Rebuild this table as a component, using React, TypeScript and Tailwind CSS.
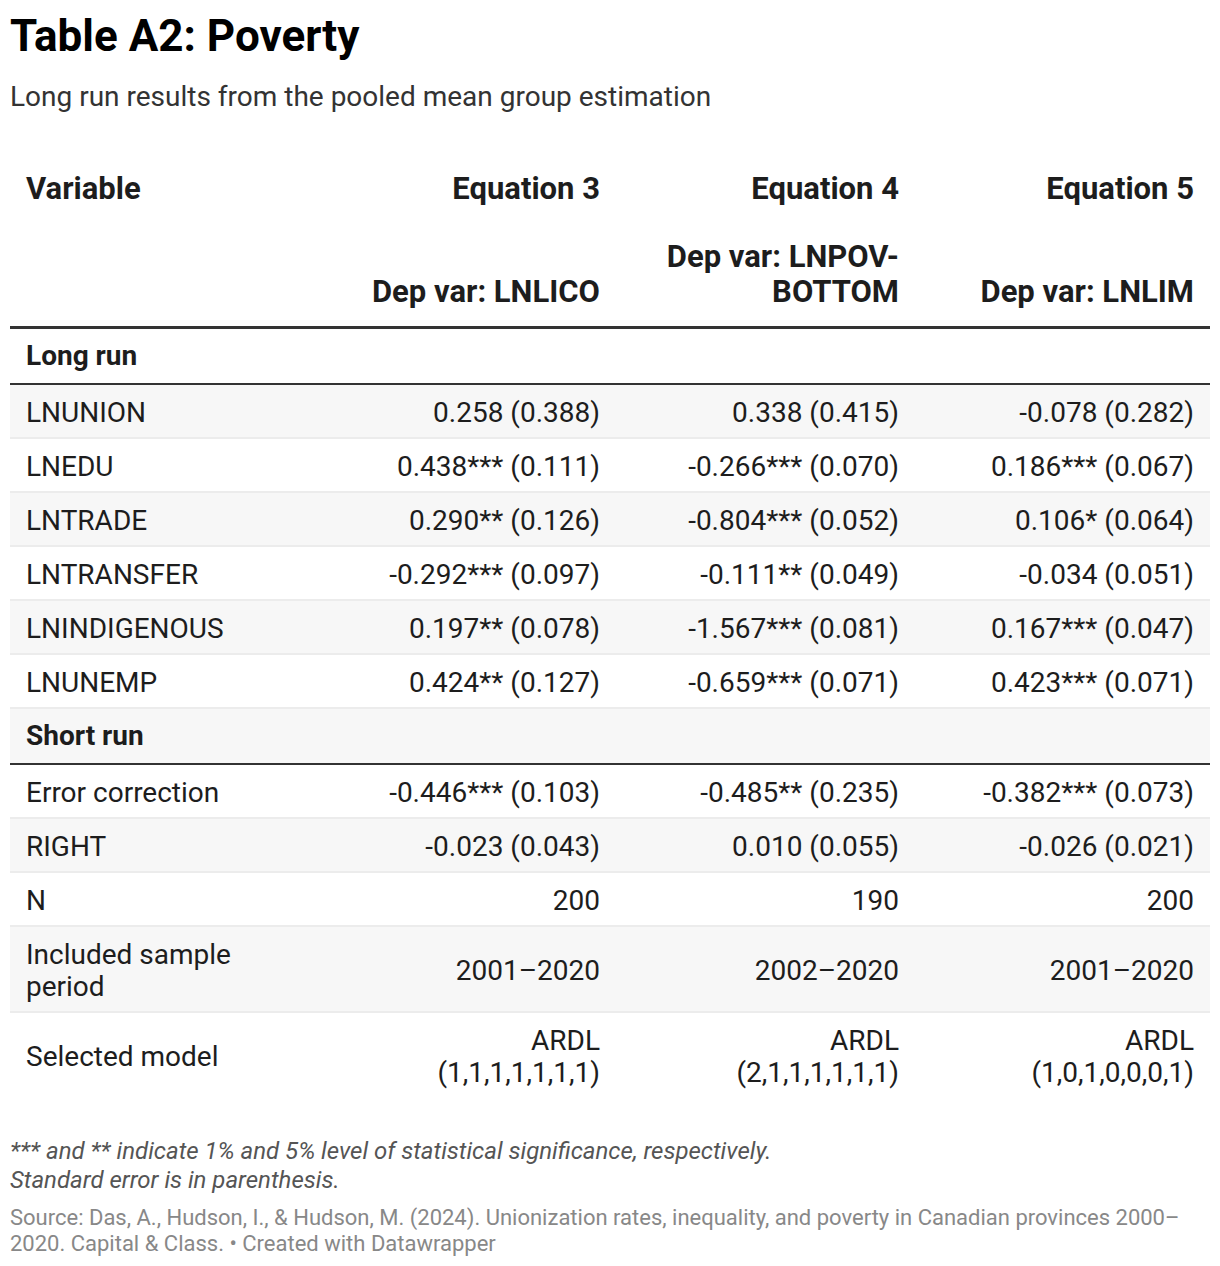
import React from "react";

type Row = {
  label: React.ReactNode;
  values: React.ReactNode[];
};

const longRun: Row[] = [
  { label: "LNUNION", values: ["0.258 (0.388)", "0.338 (0.415)", "-0.078 (0.282)"] },
  { label: "LNEDU", values: ["0.438*** (0.111)", "-0.266*** (0.070)", "0.186*** (0.067)"] },
  { label: "LNTRADE", values: ["0.290** (0.126)", "-0.804*** (0.052)", "0.106* (0.064)"] },
  { label: "LNTRANSFER", values: ["-0.292*** (0.097)", "-0.111** (0.049)", "-0.034 (0.051)"] },
  { label: "LNINDIGENOUS", values: ["0.197** (0.078)", "-1.567*** (0.081)", "0.167*** (0.047)"] },
  { label: "LNUNEMP", values: ["0.424** (0.127)", "-0.659*** (0.071)", "0.423*** (0.071)"] },
];

const shortRun: Row[] = [
  { label: "Error correction", values: ["-0.446*** (0.103)", "-0.485** (0.235)", "-0.382*** (0.073)"] },
  { label: "RIGHT", values: ["-0.023 (0.043)", "0.010 (0.055)", "-0.026 (0.021)"] },
  { label: "N", values: ["200", "190", "200"] },
  {
    label: (
      <>
        Included sample
        <br />
        period
      </>
    ),
    values: ["2001–2020", "2002–2020", "2001–2020"],
  },
  {
    label: "Selected model",
    values: [
      <>ARDL<br />(1,1,1,1,1,1,1)</>,
      <>ARDL<br />(2,1,1,1,1,1,1)</>,
      <>ARDL<br />(1,0,1,0,0,0,1)</>,
    ],
  },
];

const cols = "grid grid-cols-[307px_299px_299px_295px]";

function DataRow({ row, striped, last }: { row: Row; striped: boolean; last?: boolean }) {
  return (
    <div
      className={`${cols} ${last ? "" : "border-b-2 border-[#ececec]"} ${striped ? "bg-[#f7f7f7]" : "bg-white"}`}
    >
      <div className="flex items-center px-4 pt-[12px] pb-[8px] leading-[32px]">{row.label}</div>
      {row.values.map((v, i) => (
        <div key={i} className="flex items-center justify-end text-right px-4 pt-[12px] pb-[8px] leading-[32px]">
          <span>{v}</span>
        </div>
      ))}
    </div>
  );
}

function SectionRow({ title, striped }: { title: string; striped: boolean }) {
  return (
    <div
      className={`border-b-2 border-[#333333] px-4 pt-[10px] pb-[11px] leading-[33px] font-bold ${striped ? "bg-[#f7f7f7]" : "bg-white"}`}
    >
      {title}
    </div>
  );
}

export default function App() {
  return (
    <div
      className="w-[1220px] min-h-[1266px] bg-white px-[10px] text-[#1d1d1d]"
      style={{ fontFamily: "Roboto, 'Liberation Sans', sans-serif" }}
    >
      {/* Title */}
      <h1 className="pt-[12px] text-[44px] leading-[48px] font-bold text-black">Table A2: Poverty</h1>
      <p className="mt-[21px] text-[28px] leading-[32px] text-[#333333]">
        Long run results from the pooled mean group estimation
      </p>

      {/* Table */}
      <div className="mt-[40px] text-[28px]">
        <div
          className={`${cols} border-b-[3px] border-[#333333] font-bold text-[31px] leading-[35px] pt-[18px] pb-[17px]`}
        >
          <div className="px-4">Variable</div>
          <div className="px-4 flex flex-col items-end text-right justify-between h-[138px]">
            <span>Equation 3</span>
            <span>Dep var: LNLICO</span>
          </div>
          <div className="px-4 flex flex-col items-end text-right justify-between h-[138px]">
            <span>Equation 4</span>
            <span>
              Dep var: LNPOV-
              <br />
              BOTTOM
            </span>
          </div>
          <div className="px-4 flex flex-col items-end text-right justify-between h-[138px]">
            <span>Equation 5</span>
            <span>Dep var: LNLIM</span>
          </div>
        </div>

        <SectionRow title="Long run" striped={false} />
        {longRun.map((r, i) => (
          <DataRow key={i} row={r} striped={i % 2 === 0} />
        ))}
        <SectionRow title="Short run" striped={true} />
        {shortRun.map((r, i) => (
          <DataRow key={i} row={r} striped={i % 2 === 1} last={i === shortRun.length - 1} />
        ))}
      </div>

      {/* Notes */}
      <div className="mt-[40px] text-[24px] leading-[29px] italic text-[#555555]">
        <p>*** and ** indicate 1% and 5% level of statistical significance, respectively.</p>
        <p>Standard error is in parenthesis.</p>
      </div>
      <p className="mt-[10px] text-[22px] leading-[26px] text-[#888888]">
        Source: Das, A., Hudson, I., &amp; Hudson, M. (2024). Unionization rates, inequality, and poverty in Canadian
        provinces 2000–
        <br />
        2020. Capital &amp; Class. • Created with Datawrapper
      </p>
    </div>
  );
}
